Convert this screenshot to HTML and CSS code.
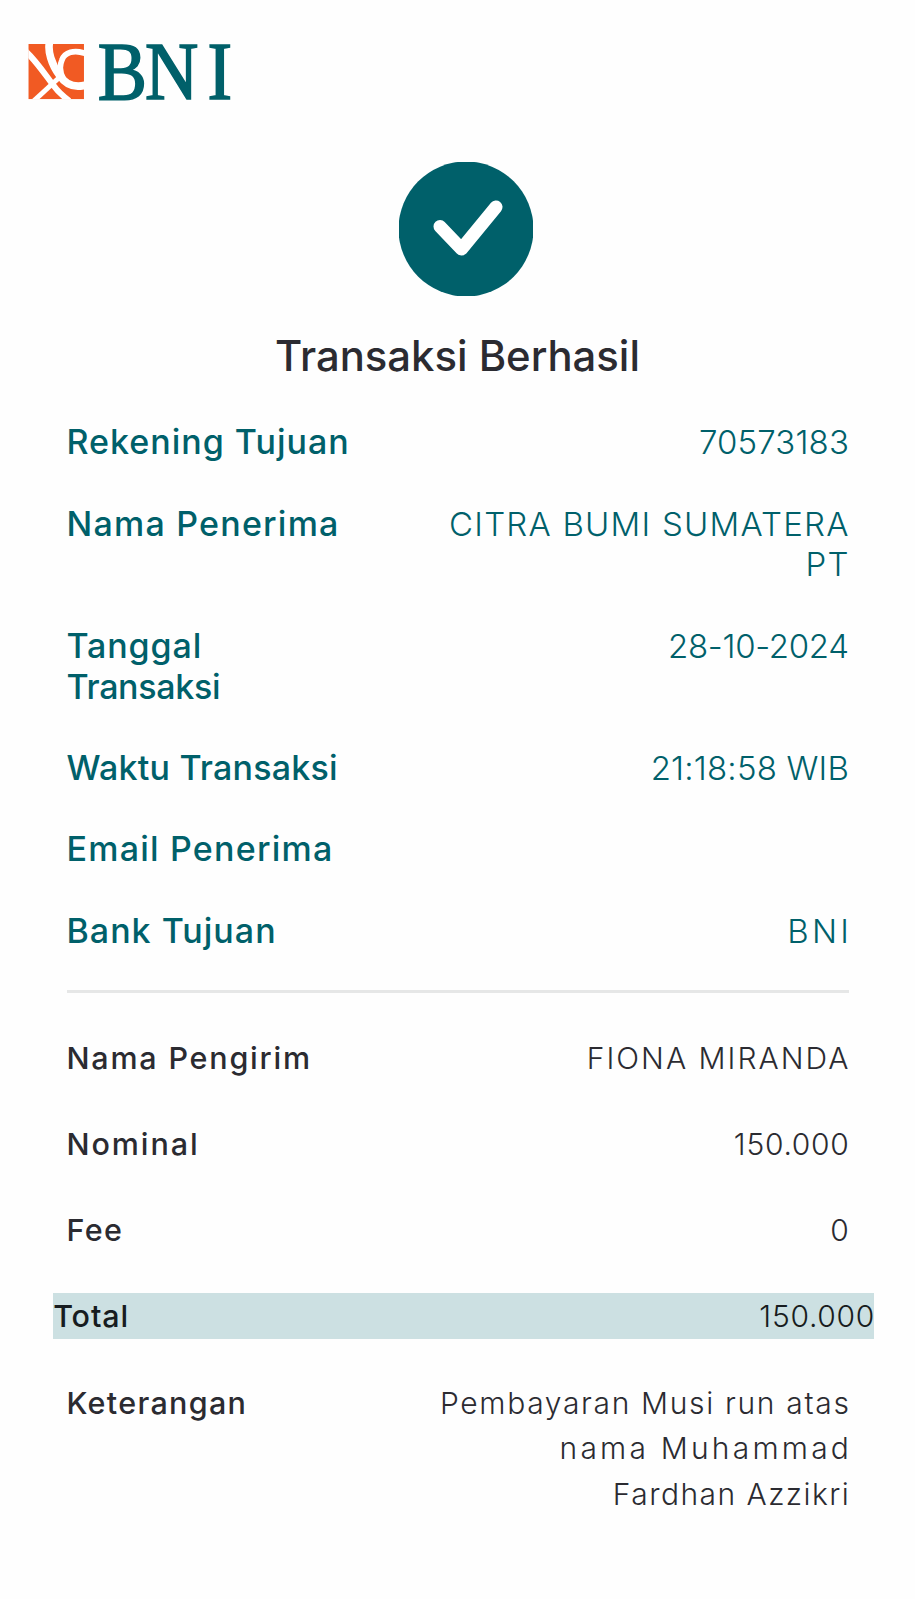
FILE: index.html
```html
<!DOCTYPE html>
<html lang="id">
<head>
<meta charset="utf-8">
<title>Transaksi Berhasil</title>
<link rel="stylesheet" href="styles.css">
</head>
<body>
<main class="receipt">
  <header class="brand">
    <svg class="logo" viewBox="0 -30 260 120" role="img" aria-label="BNI">
      <svg x="28.3" y="4" width="55.7" height="55.3" viewBox="85 72 167 166">
        <rect x="85" y="72" width="167" height="166" fill="#f15a23"/>
        <g fill="none" stroke="#fff">
          <path d="M76 93C108 122 135 163 160 196Q176 219 208 243" stroke-width="18"/>
          <path d="M98 246L186 165" stroke-width="15"/>
          <path d="M149 66C142 92 155 134 178 165C198 196 226 204 258 195" stroke-width="23"/>
          <path d="M258 101C222 88 194 97 186 120C176 142 184 166 192 180" stroke-width="17"/>
        </g>
      </svg>
      <text class="wordmark" x="108.500 161 230.500" y="58.500" transform="scale(.9 1)">BNI</text>
    </svg>
  </header>

  <section class="status">
    <svg class="check" viewBox="0 0 134 134" aria-hidden="true">
      <circle cx="67" cy="67" r="67.500" fill="#00606a"/>
      <path d="M41 64.5L62.500 87L97 45" fill="none" stroke="#fff" stroke-width="13" stroke-linecap="round" stroke-linejoin="round"/>
    </svg>
    <h1 class="title">Transaksi Berhasil</h1>
  </section>

  <dl class="details">
    <div class="row"><dt class="s10">Rekening Tujuan</dt><dd class="s01">70573183</dd></div>
    <div class="row"><dt class="s12">Nama Penerima</dt><dd class="s12 caps">CITRA BUMI SUMATERA PT</dd></div>
    <div class="row"><dt class="date"><span class="s08">Tanggal</span> <span class="tight">Transaksi</span></dt><dd class="tight">28-10-2024</dd></div>
    <div class="row"><dt class="s02">Waktu Transaksi</dt><dd class="s02">21:18:58 WIB</dd></div>
    <div class="row"><dt class="s12">Email Penerima</dt><dd></dd></div>
    <div class="row"><dt class="s10">Bank Tujuan</dt><dd class="s32">BNI</dd></div>
  </dl>

  <dl class="amounts">
    <div class="row"><dt class="s18">Nama Pengirim</dt><dd class="s20 caps">FIONA MIRANDA</dd></div>
    <div class="row"><dt class="s19">Nominal</dt><dd class="s07">150.000</dd></div>
    <div class="row"><dt class="s13">Fee</dt><dd>0</dd></div>
    <div class="row total"><dt class="s08">Total</dt><dd class="s07">150.000</dd></div>
    <div class="row"><dt class="s13">Keterangan</dt><dd class="note"><span class="s16">Pembayaran Musi run atas</span> <span class="s32">nama Muhammad</span> <span class="s14">Fardhan Azzikri</span></dd></div>
  </dl>
</main>
</body>
</html>
```
FILE: styles.css
```css
* { box-sizing: border-box; }

body {
  margin: 0;
  background: #fefefe;
  font-family: Inter, "Open Sans", sans-serif;
}

.receipt { width: 915px; height: 1599px; overflow: hidden; }

.brand { padding-top: 10px; }
.logo { display: block; width: 260px; height: 120px; }
.wordmark {
  font: 82px "Liberation Serif", serif;
  fill: #00606a;
  stroke: #00606a;
  stroke-width: 1.7px;
}

.status {
  display: flex;
  flex-direction: column;
  align-items: center;
  padding-top: 32px;
}
.check { width: 134px; height: 134px; margin-left: 16px; }
.title {
  margin: 34px 0 0;
  font-size: 41.8px;
  font-weight: 500;
  line-height: 52px;
  color: #2b2b31;
}

dl, dd { margin: 0; }
.row {
  display: flex;
  justify-content: space-between;
  align-items: baseline;
}
dt { font-weight: 500; letter-spacing: var(--track, 0); }
dd {
  font-weight: 300;
  text-align: right;
  letter-spacing: var(--track, 0);
  margin-right: calc(-1 * var(--track, 0px) - .4px);
}

.details {
  margin: 40.400px 66.500px 0;
  padding-bottom: 38.600px;
  border-bottom: 3px solid #e6e7e7;
  display: flex;
  flex-direction: column;
  gap: 40.7px;
  font-size: 34px;
  line-height: 40.7px;
  color: #00606a;
}
.details dd { font-size: 33px; max-width: 405px; }
.details .row { height: 40.7px; }
.details .row:nth-child(2),
.details .row:nth-child(3) { height: 81.4px; }
.date { width: 240px; }
.date span { display: block; }

.amounts {
  margin: 41.700px 66.500px 0;
  display: flex;
  flex-direction: column;
  gap: 40.7px;
  font-size: 30.5px;
  line-height: 45.6px;
  color: #2b2b31;
}
.amounts dd { font-size: 30px; }
.amounts .row { height: 45.6px; }
.total {
  margin: 0 -25.500px 0 -13.300px;
  background: #cce0e2;
  color: #171c20;
}
.note span {
  display: block;
  letter-spacing: var(--track);
  margin-right: calc(-1 * var(--track));
}
.caps { padding-right: .4px; }

/* Tracking steps */
.date span { letter-spacing: var(--track); }
.tight { --track: -.32px; }
.s01 { --track: .14px; }
.s02 { --track: .2px; }
.s07 { --track: .73px; }
.s08 { --track: .88px; }
.s10 { --track: 1px; }
.s12 { --track: 1.22px; }
.s13 { --track: 1.32px; }
.s14 { --track: 1.45px; }
.s16 { --track: 1.67px; }
.s18 { --track: 1.79px; }
.s19 { --track: 1.93px; }
.s20 { --track: 2.02px; }
.s32 { --track: 3.2px; }
```
